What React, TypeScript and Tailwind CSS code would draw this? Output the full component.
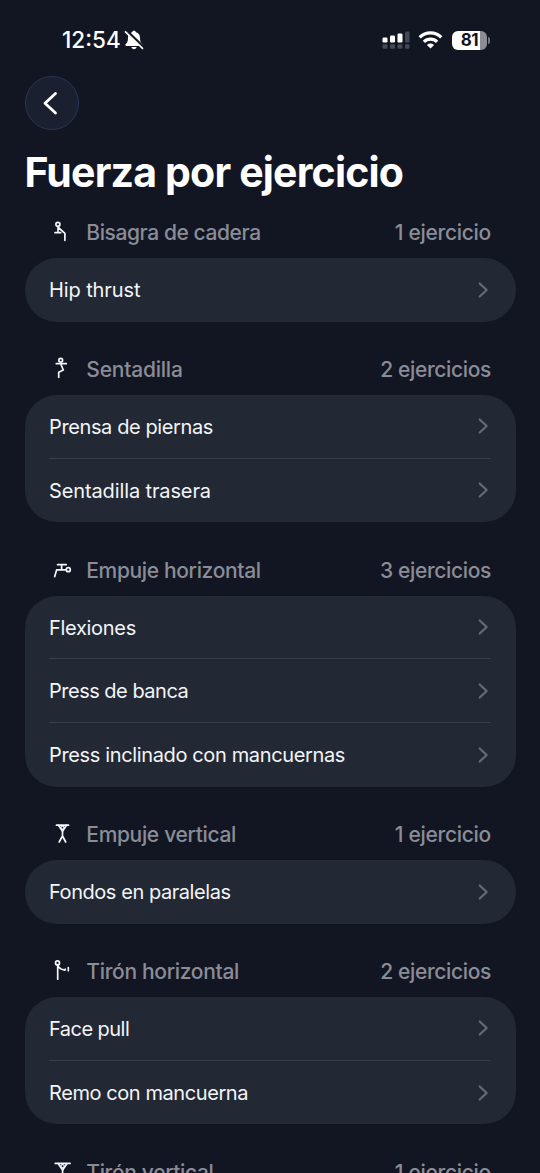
import type { ReactNode } from "react";

type Row = { label: string; tracking: string };
type Section = {
  title: string;
  tracking: string;
  count: string;
  countTracking: string;
  icon: ReactNode;
  rows: Row[];
};

const sections: Section[] = [
  {
    title: "Bisagra de cadera",
    tracking: "tracking-[-0.410px]",
    count: "1 ejercicio",
    countTracking: "tracking-[-0.290px]",
    icon: (
      <>
        <circle cx="8.9" cy="5.3" r="2" />
        <path d="M9 7.700V13.500M6 13.700H11.700M9.300 8.500L15.900 14.300V21.300" />
      </>
    ),
    rows: [{ label: "Hip thrust", tracking: "tracking-[-0.100px]" }],
  },
  {
    title: "Sentadilla",
    tracking: "tracking-[-0.220px]",
    count: "2 ejercicios",
    countTracking: "tracking-[-0.350px]",
    icon: (
      <>
        <circle cx="11.7" cy="4.2" r="1.9" />
        <path d="M7.300 7.700H17.300M11.700 7.700L14.300 14L9.700 16.200V21.300" />
      </>
    ),
    rows: [
      { label: "Prensa de piernas", tracking: "tracking-[-0.390px]" },
      { label: "Sentadilla trasera", tracking: "tracking-[-0.120px]" },
    ],
  },
  {
    title: "Empuje horizontal",
    tracking: "tracking-[-0.350px]",
    count: "3 ejercicios",
    countTracking: "tracking-[-0.350px]",
    icon: (
      <>
        <path d="M8.600 7.700H17.200M12.600 7.700V12.900M17.200 12.900H7.600L5.700 19.600" />
        <circle cx="19.300" cy="12.700" r="2" />
      </>
    ),
    rows: [
      { label: "Flexiones", tracking: "tracking-[-0.300px]" },
      { label: "Press de banca", tracking: "tracking-[-0.500px]" },
      { label: "Press inclinado con mancuernas", tracking: "tracking-[-0.360px]" },
    ],
  },
  {
    title: "Empuje vertical",
    tracking: "tracking-[-0.330px]",
    count: "1 ejercicio",
    countTracking: "tracking-[-0.290px]",
    icon: (
      <>
        <path d="M7.500 4.200H19.500" strokeWidth="1.800" />
        <path d="M9.700 4.500L13.500 10.300L17.300 4.500" />
        <circle cx="13.500" cy="6.600" r="1.500" strokeWidth="1.200" />
        <path d="M13.500 10V15L10.200 21M13.500 15L16.700 21" />
      </>
    ),
    rows: [{ label: "Fondos en paralelas", tracking: "tracking-[-0.440px]" }],
  },
  {
    title: "Tirón horizontal",
    tracking: "tracking-[-0.320px]",
    count: "2 ejercicios",
    countTracking: "tracking-[-0.350px]",
    icon: (
      <>
        <circle cx="8.500" cy="4.900" r="2" />
        <path d="M8.700 7V21.200M9 8.500L11.500 10.700L15.700 12.200L16.300 11.200M19.300 9.500V12.700" />
      </>
    ),
    rows: [
      { label: "Face pull", tracking: "tracking-[-0.530px]" },
      { label: "Remo con mancuerna", tracking: "tracking-[-0.420px]" },
    ],
  },
  {
    title: "Tirón vertical",
    tracking: "tracking-[-0.350px]",
    count: "1 ejercicio",
    countTracking: "tracking-[-0.290px]",
    icon: (
      <>
        <path d="M6.300 4.400H21" strokeWidth="1.800" />
        <path d="M9.300 4.800L13.600 11L17.900 4.800" />
        <circle cx="13.600" cy="7.300" r="1.600" strokeWidth="1.200" />
        <path d="M13.600 10.500V15.500L10.200 21.500M13.600 15.500L17 21.500" />
      </>
    ),
    rows: [{ label: "Dominadas", tracking: "tracking-[-0.400px]" }],
  },
];

function StatusBar() {
  return (
    <div className="flex h-[76px] items-start justify-between pr-[50px] pl-[62px] pt-[26px]">
      <div className="flex h-7 items-center gap-[3px]">
        <span className="text-[22.5px] font-medium">12:54</span>
        <svg width="20" height="20" viewBox="0 0 20 20" fill="none">
          <path
            d="M10 .7c-1 0-1.800.6-2 1.600C5.400 3.100 4 5.100 4 7.800c0 3.700-.7 4.800-2.300 6.300-.7.700-.3 1.900.8 1.900h15c1.100 0 1.500-1.200.8-1.900C16.700 12.600 16 11.500 16 7.800c0-2.700-1.400-4.700-4-5.500C11.800 1.300 11 .7 10 .7Z"
            fill="white"
          />
          <path d="M7.400 17h5.200c-.3 1.300-1.300 2.200-2.600 2.200S7.700 18.300 7.400 17Z" fill="white" />
          <path d="M2.500 1L19.500 17.500" stroke="#121622" strokeWidth="3.200" />
          <path d="M1.500 1.800L18.500 18.300" stroke="white" strokeWidth="1.700" strokeLinecap="round" />
        </svg>
      </div>
      <div className="flex h-7 items-center">
        <svg width="28" height="18" viewBox="0 0 28 18" fill="white">
          <rect x="0.500" y="6.500" width="5" height="5" rx="1.200" />
          <rect x="8" y="4.500" width="5" height="7" rx="1.200" />
          <rect x="15.500" y="2.500" width="5" height="9" rx="1.200" />
          <g fill="#454955">
            <rect x="23" y="0.500" width="4.500" height="11" rx="1.200" />
            <rect x="0.500" y="13.300" width="5" height="4.500" rx="1.200" />
            <rect x="8" y="13.300" width="5" height="4.500" rx="1.200" />
            <rect x="15.500" y="13.300" width="5" height="4.500" rx="1.200" />
            <rect x="23" y="13.300" width="4.500" height="4.500" rx="1.200" />
          </g>
        </svg>
        <svg className="ml-[8px]" width="25" height="18" viewBox="0 0 25 18" fill="none" stroke="white" strokeWidth="3.200">
          <path d="M1.700 6.300a15.300 15.300 0 0 1 21.600 0" />
          <path d="M5.900 10.900a9.300 9.300 0 0 1 13.200 0" />
          <path d="M12.500 17.500L8.900 13.900a5.100 5.100 0 0 1 7.200 0Z" fill="white" stroke="none" />
        </svg>
        <div className="ml-[9px] flex h-[19px] w-[35px] items-center justify-center rounded-[6px] bg-[linear-gradient(90deg,#fff_81%,#8b8d96_81%)] pt-px text-[17px] leading-[19px] font-bold tracking-[-0.5px] text-[#121622]">
          81
        </div>
        <div className="ml-[1px] h-[7px] w-[2px] rounded-r-full bg-[#737681]" />
      </div>
    </div>
  );
}

function SectionHeader({ section }: { section: Section }) {
  return (
    <div className="flex h-[52px] items-center pr-[49px] pl-[49px] text-[21px] font-medium text-[#8a8d98]">
      <svg
        width="26"
        height="26"
        viewBox="0 0 26 26"
        fill="none"
        stroke="#f4f6fc"
        strokeWidth="1.700"
        strokeLinecap="round"
        strokeLinejoin="round"
      >
        {section.icon}
      </svg>
      <span className={"ml-[11.300px] pt-[1.500px] whitespace-nowrap " + section.tracking}>{section.title}</span>
      <span className={"ml-auto pt-[1.500px] whitespace-nowrap " + section.countTracking}>{section.count}</span>
    </div>
  );
}

export default function App() {
  return (
    <main className="h-[1173px] w-[540px] overflow-hidden bg-[#121622] font-['Inter',sans-serif] text-white">
      <StatusBar />
      <button
        aria-label="Atrás"
        className="ml-[24.500px] flex size-[54px] items-center justify-center rounded-full border border-[#293656] bg-[#1b2030]"
      >
        <svg width="26" height="26" viewBox="0 0 26 26" fill="none" stroke="white" strokeWidth="2.800" strokeLinecap="round" strokeLinejoin="round">
          <path d="M16.500 3.500L6 13.300L16.500 23" />
        </svg>
      </button>
      <h1 className="mt-[18px] ml-[24.500px] h-[48px] text-[41px] leading-[48px] font-bold tracking-[-0.820px] whitespace-nowrap">
        Fuerza por ejercicio
      </h1>
      <div className="mt-[10px] flex flex-col gap-[21.500px]">
        {sections.map((section) => (
          <section key={section.title}>
            <SectionHeader section={section} />
            <div className="mx-[24.500px] rounded-[32px] bg-[#222935] px-[24.500px]">
              {section.rows.map((row, i) => (
                <div
                  key={row.label}
                  className={
                    "flex h-[63.600px] items-center justify-between text-[20px] text-[#f4f5f8] " +
                    (i < section.rows.length - 1 ? "border-b-[1.500px] border-[#383f4b]" : "")
                  }
                >
                  <span className={"pt-[1px] whitespace-nowrap " + row.tracking}>{row.label}</span>
                  <svg className="mr-[0.700px]" width="14" height="18" viewBox="0 0 14 18" fill="none" stroke="#656a75" strokeWidth="2.200" strokeLinecap="round" strokeLinejoin="round">
                    <path d="M3.700 2.500L10.700 9L3.700 15.500" />
                  </svg>
                </div>
              ))}
            </div>
          </section>
        ))}
      </div>
    </main>
  );
}
